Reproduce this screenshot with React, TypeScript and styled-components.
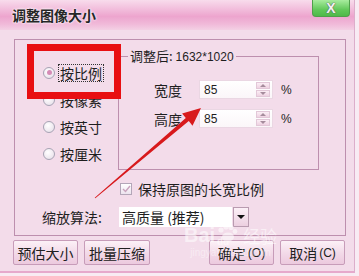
import React from "react";
import styled, { createGlobalStyle } from "styled-components";

const GlobalStyle = createGlobalStyle`
  html, body {
    margin: 0;
    padding: 0;
    background: #f8ebf3;
  }
  body {
    font-family: "Noto Sans CJK SC", "Noto Sans", sans-serif;
    color: #1e1e1e;
  }
`;

const Window = styled.div`
  position: relative;
  width: 355px;
  height: 273px;
  box-sizing: border-box;
  border-right: 1px solid #dcaecb;
  border-bottom: 2px solid #e6a9cc;
  background: #f3dcea;
  display: flex;
  flex-direction: column;
  overflow: hidden;
`;

const TitleBar = styled.div`
  height: 30px;
  flex: none;
  display: flex;
  align-items: flex-start;
  justify-content: space-between;
  background: linear-gradient(
    #f8dcec 0%,
    #f2bedc 30%,
    #eda5ce 55%,
    #f0b9d9 80%,
    #f3d0e4 100%
  );
`;

const Title = styled.div`
  margin: 6px 0 0 12px;
  font-size: 14px;
  font-weight: bold;
  line-height: 18px;
  color: #262626;
  text-shadow: 0 0 2px #fff, 0 0 3px #fff;
`;

const CloseButton = styled.div`
  width: 38px;
  height: 17px;
  margin-right: 4px;
  box-sizing: border-box;
  border: 1px solid #4f9f4a;
  border-top: none;
  border-radius: 0 0 4px 4px;
  background: linear-gradient(#a8ec9e, #62c85a 60%, #4fb94a);
  display: flex;
  align-items: center;
  justify-content: center;
  font-family: "Liberation Sans", sans-serif;
  font-size: 14px;
  font-weight: bold;
  color: #f2f2f2;
  text-shadow: 0 0 1px #555, 0 0 1px #555;
`;

const Body = styled.div`
  flex: 1;
  padding: 9px 0 0 13px;
  display: flex;
  flex-direction: column;
`;

const Group = styled.div`
  margin-left: 1px;
  width: 332px;
  height: 197px;
  box-sizing: border-box;
  border: 1px solid #bd8fae;
  display: grid;
  grid-template-columns: 103px 201px;
  grid-template-rows: auto auto auto;
  align-content: start;
  padding-top: 8px;
`;

const RadioList = styled.div`
  padding: 11px 0 0 28px;
  display: flex;
  flex-direction: column;
`;

const RadioRow = styled.div`
  height: 27px;
  display: flex;
  align-items: center;
  gap: 3px;
  font-size: 14px;
`;

const RadioDot = styled.span<{ $checked?: boolean }>`
  width: 12px;
  height: 12px;
  box-sizing: border-box;
  border-radius: 50%;
  border: 1px solid #a7a3b4;
  background: radial-gradient(circle at 40% 35%, #ffffff, #e4dbe6);
  display: flex;
  align-items: center;
  justify-content: center;
  &::after {
    content: "";
    width: 5px;
    height: 5px;
    border-radius: 50%;
    background: ${(p) => (p.$checked ? "#d58bb6" : "transparent")};
  }
`;

const RadioLabel = styled.span<{ $focused?: boolean }>`
  padding: 0 1px;
  line-height: 16px;
  border: 1px dotted ${(p) => (p.$focused ? "#333" : "transparent")};
`;

const SizeBox = styled.fieldset`
  margin: 0;
  padding: 15px 0 41px 9px;
  min-inline-size: 0;
  border: 1px solid #bd8fae;
  box-sizing: border-box;
  display: flex;
  flex-direction: column;
  gap: 10px;
`;

const Legend = styled.legend`
  padding: 0 2px;
  line-height: 16px;
  font-size: 13px;
  white-space: nowrap;
`;

const LegendNum = styled.span`
  font-family: "Liberation Sans", sans-serif;
  font-size: 12px;
`;

const FieldRow = styled.div`
  margin-left: 26px;
  display: flex;
  align-items: center;
  height: 19px;
  font-size: 14px;
`;

const FieldLabel = styled.span`
  width: 45px;
`;

const NumberBox = styled.div`
  width: 74px;
  height: 19px;
  box-sizing: border-box;
  border: 1px solid #ead7e3;
  background: linear-gradient(#ffffff, #fbf6f9);
  display: flex;
  align-items: center;
  justify-content: space-between;
  padding: 0 2px 0 4px;
  font-family: "Liberation Sans", sans-serif;
  font-size: 12px;
`;

const Spinner = styled.div`
  width: 14px;
  height: 15px;
  display: flex;
  flex-direction: column;
  gap: 1px;
`;

const SpinButton = styled.div<{ $down?: boolean }>`
  flex: 1;
  border: 1px solid #e2c8d8;
  background: linear-gradient(#fbeef5, #efd2e2);
  display: flex;
  align-items: center;
  justify-content: center;
  &::after {
    content: "";
    border-left: 3px solid transparent;
    border-right: 3px solid transparent;
    ${(p) =>
      p.$down ? "border-top: 3px solid #a58c9c;" : "border-bottom: 3px solid #a58c9c;"}
  }
`;

const Unit = styled.span`
  margin-left: 8px;
  font-family: "Liberation Sans", sans-serif;
  font-size: 12px;
`;

const CheckRow = styled.div`
  grid-column: 2;
  margin: 11px 0 0 2px;
  height: 16px;
  display: flex;
  align-items: center;
  gap: 6px;
  font-size: 14px;
`;

const CheckBox = styled.span`
  width: 12px;
  height: 12px;
  box-sizing: border-box;
  border: 1px solid #b3a6b8;
  background: linear-gradient(#ffffff, #ece3ee);
  display: flex;
  align-items: center;
  justify-content: center;
`;

const AlgoLabel = styled.div`
  grid-column: 1;
  padding-left: 27px;
  margin-top: 10px;
  height: 20px;
  display: flex;
  align-items: center;
  font-size: 14px;
`;

const Select = styled.div`
  grid-column: 2;
  margin: 10px 0 0 1px;
  width: 130px;
  height: 20px;
  box-sizing: border-box;
  display: flex;
  align-items: stretch;
  font-size: 14px;
`;

const SelectValue = styled.div`
  flex: 1;
  background: #ffffff;
  display: flex;
  align-items: center;
  padding-left: 3px;
`;

const SelectArrow = styled.div`
  width: 16px;
  margin-left: 1px;
  box-sizing: border-box;
  border: 1px solid #b99bb0;
  background: linear-gradient(#fcf0f7, #eccfe0);
  display: flex;
  align-items: center;
  justify-content: center;
  &::after {
    content: "";
    border-left: 4px solid transparent;
    border-right: 4px solid transparent;
    border-top: 4px solid #111;
  }
`;

const ButtonRow = styled.div`
  margin-top: 4px;
  width: 332px;
  display: flex;
  gap: 6px;
`;

const Button = styled.div<{ $push?: boolean; $w?: number }>`
  width: ${(p) => p.$w ?? 65}px;
  height: 25px;
  box-sizing: border-box;
  margin-left: ${(p) => (p.$push ? "auto" : "0")};
  border: 1px solid #c79cb9;
  border-radius: 2px;
  background: linear-gradient(#fcf1f7, #f3dbe9 50%, #ecc9de);
  display: flex;
  align-items: center;
  justify-content: center;
  font-size: 14px;
  color: #202020;
`;

const Latin = styled.span`
  font-family: "Liberation Sans", sans-serif;
  font-size: 12px;
  margin-left: 2px;
`;

const Highlight = styled.div`
  position: absolute;
  left: 27px;
  top: 44px;
  width: 94px;
  height: 55px;
  box-sizing: border-box;
  border: 7px solid #e80f12;
  pointer-events: none;
`;

const Overlay = styled.svg`
  position: absolute;
  left: 0;
  top: 0;
  pointer-events: none;
`;

const Watermark = styled.div`
  position: absolute;
  left: 184px;
  top: 224px;
  display: flex;
  flex-direction: column;
  align-items: center;
  color: #ffffff;
  opacity: 0.55;
  pointer-events: none;
`;

const WatermarkLogo = styled.div`
  display: flex;
  align-items: flex-end;
  font-family: "Liberation Sans", sans-serif;
  font-size: 20px;
  font-weight: bold;
  line-height: 22px;
`;

const WatermarkCn = styled.span`
  font-family: "Noto Sans CJK SC", sans-serif;
  font-size: 17px;
  font-weight: normal;
  line-height: 20px;
  margin-left: 4px;
`;

const WatermarkUrl = styled.div`
  font-family: "Liberation Sans", sans-serif;
  font-size: 10px;
  line-height: 12px;
  margin-top: 1px;
  opacity: 0.8;
`;

const radios = ["按比例", "按像素", "按英寸", "按厘米"];

export default function App() {
  return (
    <>
      <GlobalStyle />
      <Window>
        <TitleBar>
          <Title>调整图像大小</Title>
          <CloseButton>X</CloseButton>
        </TitleBar>
        <Body>
          <Group>
            <RadioList>
              {radios.map((r, i) => (
                <RadioRow key={r}>
                  <RadioDot $checked={i === 0} />
                  <RadioLabel $focused={i === 0}>{r}</RadioLabel>
                </RadioRow>
              ))}
            </RadioList>
            <SizeBox>
              <Legend>
                调整后: <LegendNum>1632*1020</LegendNum>
              </Legend>
              {["宽度", "高度"].map((l) => (
                <FieldRow key={l}>
                  <FieldLabel>{l}</FieldLabel>
                  <NumberBox>
                    85
                    <Spinner>
                      <SpinButton />
                      <SpinButton $down />
                    </Spinner>
                  </NumberBox>
                  <Unit>%</Unit>
                </FieldRow>
              ))}
            </SizeBox>
            <CheckRow>
              <CheckBox>
                <svg width="9" height="8" viewBox="0 0 9 8">
                  <path d="M1 4 L3.5 6.5 L8 1" fill="none" stroke="#c9a3bd" strokeWidth="1.4" />
                </svg>
              </CheckBox>
              保持原图的长宽比例
            </CheckRow>
            <AlgoLabel>缩放算法:</AlgoLabel>
            <Select>
              <SelectValue>高质量 (推荐)</SelectValue>
              <SelectArrow />
            </Select>
          </Group>
          <ButtonRow>
            <Button $w={65}>预估大小</Button>
            <Button $w={66}>批量压缩</Button>
            <Button $push>
              确定<Latin>(O)</Latin>
            </Button>
            <Button>
              取消<Latin>(C)</Latin>
            </Button>
          </ButtonRow>
        </Body>
        <Watermark>
          <WatermarkLogo>
            Bai
            <svg width="24" height="22" viewBox="0 0 24 22">
              <circle cx="6" cy="6" r="2.6" fill="#fff" />
              <circle cx="11" cy="3" r="2.6" fill="#fff" />
              <circle cx="16" cy="3.5" r="2.6" fill="#fff" />
              <circle cx="20" cy="7.5" r="2.4" fill="#fff" />
              <ellipse cx="13" cy="13" rx="6" ry="4.5" fill="#fff" />
              <text x="2" y="21" fontSize="10" fill="#fff" fontFamily="Liberation Sans">du</text>
            </svg>
            <WatermarkCn>经验</WatermarkCn>
          </WatermarkLogo>
          <WatermarkUrl>jingyan.baidu.com</WatermarkUrl>
        </Watermark>
        <Highlight />
        <Overlay width="355" height="273" viewBox="0 0 355 273">
          <polygon
            points="95.3,198.3 94.7,197.7 185.8,118.1 182.1,113.5 201,108 192.5,125.7 188.8,121.1"
            fill="#d8191c"
          />
        </Overlay>
      </Window>
    </>
  );
}
